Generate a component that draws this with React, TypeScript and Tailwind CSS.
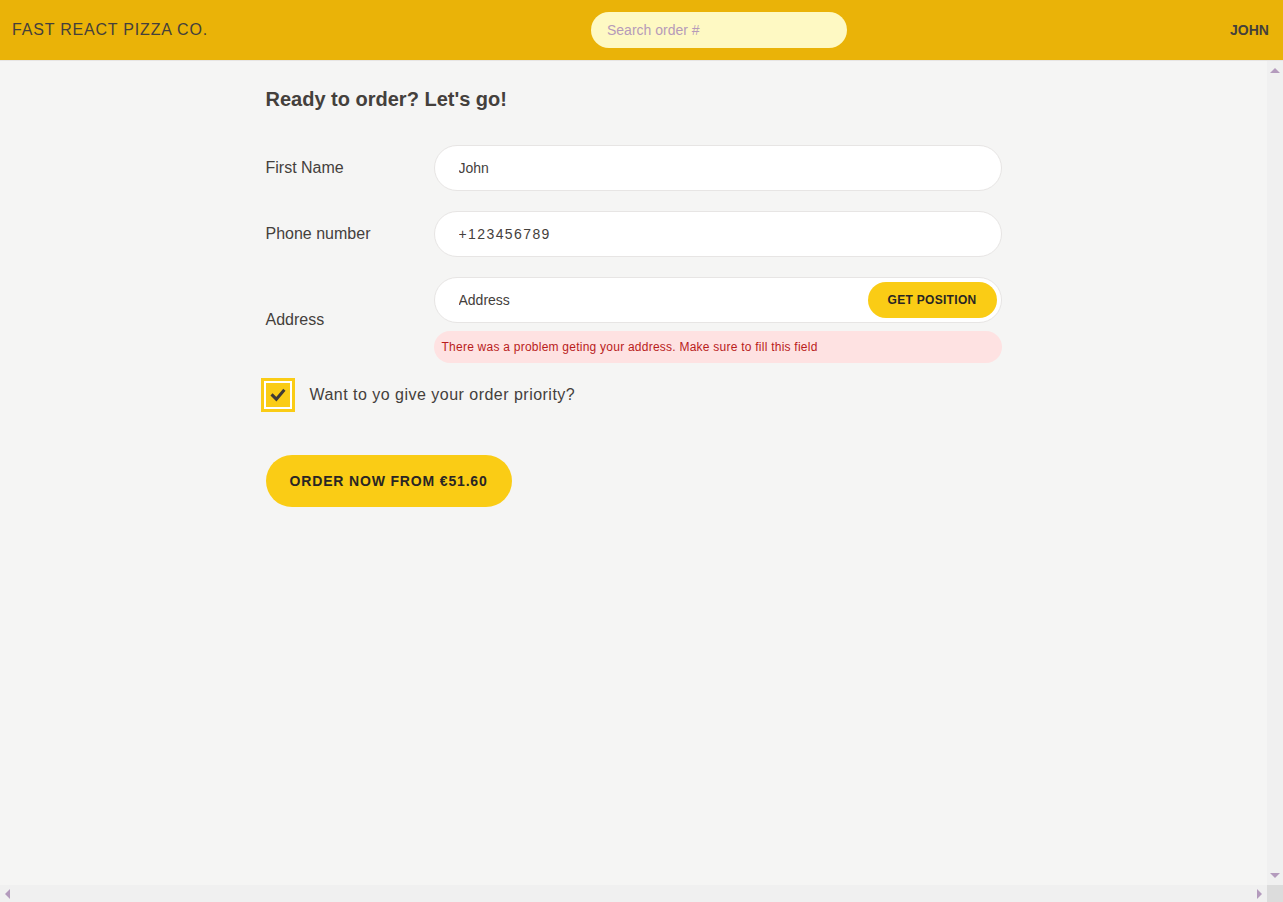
import { useState } from 'react'

function Check() {
  return (
    <svg viewBox="0 0 24 24" className="h-5 w-5" fill="none" stroke="#3f3a36" strokeWidth={3.6} strokeLinecap="square" strokeLinejoin="miter">
      <path d="M5.5 12.5l4.5 4.5 8.5-10" />
    </svg>
  )
}

// little scrollbar arrows (classic browser scrollbar)
function Arrow({ dir }: { dir: 'up' | 'down' | 'left' | 'right' }) {
  const pts = {
    up: '0,6 5,1 10,6',
    down: '0,1 10,1 5,6',
    left: '6,0 6,10 1,5',
    right: '1,0 1,10 6,5',
  }[dir]
  const box = dir === 'up' || dir === 'down' ? 'h-[7px] w-[10px]' : 'h-[10px] w-[7px]'
  return (
    <svg viewBox={dir === 'up' || dir === 'down' ? '0 0 10 7' : '0 0 7 10'} className={box}>
      <polygon points={pts} fill="#b49bbd" />
    </svg>
  )
}

export default function App() {
  const [priority, setPriority] = useState(true)

  return (
    <div className="flex h-screen flex-col bg-[#f5f5f4] text-[#44403c]" style={{ fontFamily: '"Liberation Sans", Arial, sans-serif' }}>
      {/* Header */}
      <header className="flex items-center justify-between border-b border-[#e7e5e4] bg-[#eab308] px-3 py-3 uppercase">
        <span className="tracking-wider text-[#44403c]">Fast React Pizza Co.</span>
        <input
          placeholder="Search order #"
          className="w-64 rounded-full bg-[#fef9c3] px-4 py-2 text-sm placeholder:text-[#b69bb9] focus:outline-none"
        />
        <span className="pr-0.5 text-sm font-semibold text-[#44403c]">John</span>
      </header>

      <div className="flex min-h-0 flex-1">
        <div className="min-w-0 flex-1 overflow-auto">
          <main className="mx-auto max-w-3xl">
            <div className="px-4 py-6">
              <h2 className="mb-8 text-xl font-semibold">Ready to order? Let's go!</h2>

              <form>
                <div className="mb-5 flex items-center gap-2">
                  <label className="basis-40">First Name</label>
                  <input defaultValue="John" className="grow rounded-full border border-[#e7e5e4] bg-white px-6 py-3 text-sm focus:outline-none" />
                </div>

                <div className="mb-5 flex items-center gap-2">
                  <label className="basis-40">Phone number</label>
                  <input defaultValue="+123456789" className="grow rounded-full border border-[#e7e5e4] bg-white px-6 py-3 text-sm tracking-[0.1em] focus:outline-none" />
                </div>

                <div className="mb-5 flex items-center gap-2">
                  <label className="basis-40">Address</label>
                  <div className="grow">
                    <div className="relative">
                      <input placeholder="Address" className="w-full rounded-full border border-[#e7e5e4] bg-white px-6 py-3 text-sm placeholder:text-[#44403c] focus:outline-none" />
                      <span className="absolute right-[5px] top-[5px]">
                        <button type="button" className="rounded-full bg-[#facc15] px-5 py-2.5 text-xs font-semibold uppercase tracking-wide text-[#292524]">
                          Get position
                        </button>
                      </span>
                    </div>
                    <p className="mt-2 rounded-full bg-[#fee2e2] p-2 text-xs tracking-[0.02em] text-[#b91c1c]">
                      There was a problem geting your address. Make sure to fill this field
                    </p>
                  </div>
                </div>

                <div className="mb-12 flex items-center gap-5">
                  <button
                    type="button"
                    onClick={() => setPriority(p => !p)}
                    className="flex h-6 w-6 items-center justify-center bg-[#facc15] ring-[3px] ring-[#facc15] ring-offset-2 ring-offset-white"
                  >
                    {priority && <Check />}
                  </button>
                  <label className="tracking-[0.03em]">Want to yo give your order priority?</label>
                </div>

                <button type="button" className="inline-block rounded-full bg-[#facc15] px-6 py-4 text-sm font-semibold uppercase tracking-[0.06em] text-[#292524]">
                  Order now from €51.60
                </button>
              </form>
            </div>
          </main>
        </div>

        {/* vertical scrollbar */}
        <div className="flex w-4 flex-col items-center justify-between bg-[#f0f0f0] py-1.5">
          <Arrow dir="up" />
          <Arrow dir="down" />
        </div>
      </div>

      {/* horizontal scrollbar */}
      <div className="flex h-[17px] bg-[#f0f0f0]">
        <div className="flex flex-1 items-center justify-between px-1">
          <Arrow dir="left" />
          <Arrow dir="right" />
        </div>
        <div className="w-4 bg-[#dcdcdc]" />
      </div>
    </div>
  )
}
